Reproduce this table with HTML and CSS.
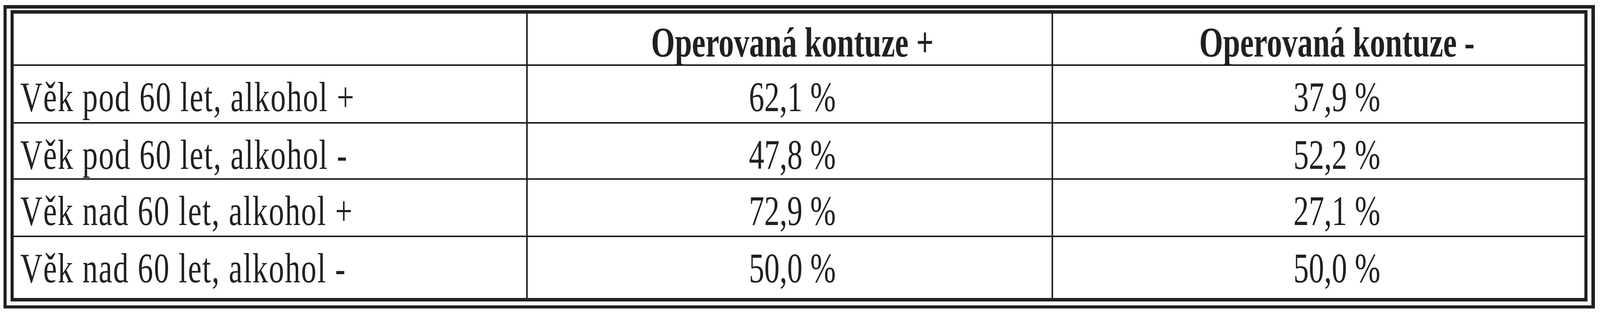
FILE: index.html
```html
<!DOCTYPE html>
<html lang="cs">
<head>
<meta charset="utf-8">
<title>Operovaná kontuze</title>
<link rel="stylesheet" href="styles.css">
</head>
<body>
<div class="frame">
  <div class="grid">
    <div class="cell head label"></div>
    <div class="cell head c2"><span class="t">Operovaná kontuze +</span></div>
    <div class="cell head c3"><span class="t">Operovaná kontuze -</span></div>

    <div class="cell label"><span class="t">Věk pod 60 let, alkohol +</span></div>
    <div class="cell c2"><span class="t">62,1 %</span></div>
    <div class="cell c3"><span class="t">37,9 %</span></div>

    <div class="cell label"><span class="t">Věk pod 60 let, alkohol -</span></div>
    <div class="cell c2"><span class="t">47,8 %</span></div>
    <div class="cell c3"><span class="t">52,2 %</span></div>

    <div class="cell label"><span class="t">Věk nad 60 let, alkohol +</span></div>
    <div class="cell c2"><span class="t">72,9 %</span></div>
    <div class="cell c3"><span class="t">27,1 %</span></div>

    <div class="cell label"><span class="t">Věk nad 60 let, alkohol -</span></div>
    <div class="cell c2"><span class="t">50,0 %</span></div>
    <div class="cell c3"><span class="t">50,0 %</span></div>
  </div>
</div>
</body>
</html>
```

FILE: styles.css
```css
html, body {
  margin: 0;
  background: #ffffff;
}
body {
  padding: 13px 13px 0 9px;
  font-family: "Liberation Serif", "Times New Roman", serif;
  color: #231f20;
  overflow: hidden;
}
.frame {
  display: block;
  box-sizing: border-box;
  width: 100%;
  border-style: solid;
  border-color: #231f20;
  border-width: 9px 9px 8px 8px;
  padding: 4px 10px 10px 10px;
  background: #ffffff;
}
.grid {
  display: grid;
  grid-template-columns: 1833fr 1873fr 1900fr;
  grid-template-rows: 130px 144px 140px 143px 156px;
  gap: 4px;
  background: #231f20;
  border-style: solid;
  border-color: #231f20;
  border-width: 9px 8px 9px 8px;
}
.cell {
  min-width: 0;
  background: #ffffff;
  font-size: 109px;
  line-height: 1;
  padding-top: 25px;
  white-space: nowrap;
  box-sizing: border-box;
}
.t {
  display: inline-block;
}
.head {
  font-weight: bold;
  padding-top: 19px;
}
.label {
  padding-left: 1.3%;
  text-align: left;
  letter-spacing: 3px;
}
.label .t {
  transform-origin: left center;
}
.c2 {
  text-align: center;
  padding-left: 1.07%;
}
.c3 {
  text-align: center;
  padding-left: 6.84%;
}
.c2 .t,
.c3 .t {
  transform-origin: center center;
}

/* keep the text's horizontal proportion when the window is narrower
   than the 5689px design width */
@media (max-width: 5000px) {
  .t {
    transform: scaleX(0.72);
  }
}
```
